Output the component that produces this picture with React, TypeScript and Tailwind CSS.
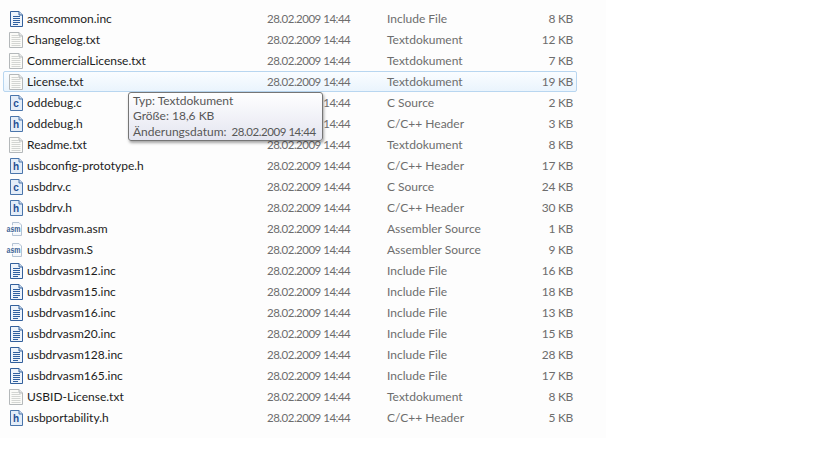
type Kind = "inc" | "txt" | "c" | "h" | "asm";
const rows: [string, string, string, Kind][] = [
  ["asmcommon.inc", "Include File", "8 KB", "inc"],
  ["Changelog.txt", "Textdokument", "12 KB", "txt"],
  ["CommercialLicense.txt", "Textdokument", "7 KB", "txt"],
  ["License.txt", "Textdokument", "19 KB", "txt"],
  ["oddebug.c", "C Source", "2 KB", "c"],
  ["oddebug.h", "C/C++ Header", "3 KB", "h"],
  ["Readme.txt", "Textdokument", "8 KB", "txt"],
  ["usbconfig-prototype.h", "C/C++ Header", "17 KB", "h"],
  ["usbdrv.c", "C Source", "24 KB", "c"],
  ["usbdrv.h", "C/C++ Header", "30 KB", "h"],
  ["usbdrvasm.asm", "Assembler Source", "1 KB", "asm"],
  ["usbdrvasm.S", "Assembler Source", "9 KB", "asm"],
  ["usbdrvasm12.inc", "Include File", "16 KB", "inc"],
  ["usbdrvasm15.inc", "Include File", "18 KB", "inc"],
  ["usbdrvasm16.inc", "Include File", "13 KB", "inc"],
  ["usbdrvasm20.inc", "Include File", "15 KB", "inc"],
  ["usbdrvasm128.inc", "Include File", "28 KB", "inc"],
  ["usbdrvasm165.inc", "Include File", "17 KB", "inc"],
  ["USBID-License.txt", "Textdokument", "8 KB", "txt"],
  ["usbportability.h", "C/C++ Header", "5 KB", "h"],
];

function FileIcon({ kind }: { kind: Kind }) {
  if (kind === "asm") {
    return (
      <svg width="18" height="16" viewBox="0 0 18 16" className="block -ml-[3px]">
        <path d="M6.5 1.5H13L15.5 4V14.5H6.5Z" fill="#f4f7fb" stroke="#b4c3d4" />
        <rect x="0" y="4" width="15" height="8" fill="#ffffff" fillOpacity="0.7" />
        <text x="0.5" y="11" fontSize="8.5" fontWeight="700" fill="#3d6496" fontFamily="'Liberation Sans',sans-serif" textLength="14" lengthAdjust="spacingAndGlyphs">asm</text>
      </svg>
    );
  }
  if (kind === "txt") {
    return (
      <svg width="14" height="16" viewBox="0 0 14 16" className="block">
        <path d="M0.5 0.5H10L13.5 4V15.5H0.5Z" fill="#fbfbf8" stroke="#b4b8ba" />
        <path d="M10 0.5V4H13.5" fill="#e4e6e6" stroke="#b4b8ba" />
        <path d="M2.5 3.5H9M2.5 5.5H11.5M2.5 7.5H11.5M2.5 9.5H11.5M2.5 11.5H11.5M2.5 13.5H11.5" stroke="#d3d5d2" />
      </svg>
    );
  }
  if (kind === "inc") {
    return (
      <svg width="13" height="16" viewBox="0 0 13 16" className="block">
        <path d="M0.5 0.5H9L12.5 4V15.5H0.5Z" fill="#eef4fb" stroke="#33609c" />
        <path d="M9 0.5V4H12.5" fill="#c8d8ea" stroke="#33609c" />
        <path d="M3 5.5H10M3 7.5H10M3 9.5H10M3 11.5H10M3 13.5H8" stroke="#2f5f9f" />
      </svg>
    );
  }
  return (
    <svg width="13" height="16" viewBox="0 0 13 16" className="block">
      <path d="M0.5 0.5H9L12.5 4V15.5H0.5Z" fill="#e4edf8" stroke="#4a75ab" />
      <path d="M9 0.5V4H12.5" fill="#c8d8ea" stroke="#4a75ab" />
      <text x="6" y="12" textAnchor="middle" fontSize="10" fontWeight="700" fill="#1f4f94" fontFamily="'Liberation Sans',sans-serif">
        {kind}
      </text>
    </svg>
  );
}

export default function App() {
  return (
    <div className="relative w-[819px] h-[460px] bg-white overflow-hidden text-[12px] font-['Lato','Open_Sans',sans-serif]">
      <div className="w-[606px] h-[438px] bg-[#fdfdfd] pt-[8px] pl-[3px]">
        <div className="w-[574px]">
          {rows.map(([name, type, size, kind]) => (
            <div
              key={name}
              className={`grid grid-cols-[23px_240px_120px_1fr] items-center h-[21px] rounded-[2px] ${
                name === "License.txt"
                  ? "border border-[#b8d6f0] bg-gradient-to-b from-[#fafdff] to-[#eaf4fd]"
                  : "border border-transparent"
              }`}
            >
              <div className="flex justify-center pl-[1px]">
                <FileIcon kind={kind} />
              </div>
              <span className="text-[#1c1c1c] whitespace-nowrap">{name}</span>
              <span className="text-[#6d6d6d] whitespace-nowrap text-[11.5px] tracking-[-0.5px]">28.02.2009 14:44</span>
              <div className="flex justify-between pr-[3px] text-[#6d6d6d] whitespace-nowrap">
                <span>{type}</span>
                <span className="tracking-[-0.3px]">{size}</span>
              </div>
            </div>
          ))}
        </div>
      </div>
      <div className="absolute left-[128px] top-[92px] w-[195px] h-[49px] rounded-[3px] border border-[#767676] bg-gradient-to-b from-white to-[#e4e5f0] shadow-[1px_2px_3px_rgba(0,0,0,0.35)] pl-[4px] leading-[15.5px] text-[#575757] whitespace-nowrap">
        <div className="-mt-[0.5px]">Typ: Textdokument</div>
        <div>Größe: 18,6 KB</div>
        <div>
          Änderungsdatum: <span className="ml-[2px] text-[11.5px] tracking-[-0.45px]">28.02.2009 14:44</span>
        </div>
      </div>
    </div>
  );
}
